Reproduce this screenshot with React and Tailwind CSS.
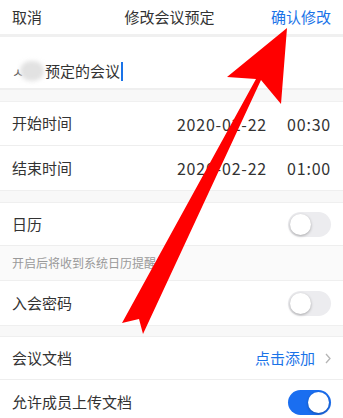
import React from "react";

const font = { fontFamily: '"Noto Sans CJK SC", "Noto Sans", sans-serif' };

const Toggle = ({ on }) => (
  <div
    className={
      "w-[43px] h-[25px] rounded-full p-[2px] flex items-center " +
      (on ? "bg-[#1a6ef0] justify-end" : "bg-[#ececef] justify-start")
    }
  >
    <div className="w-[21px] h-[21px] rounded-full bg-white shadow-[0_1px_3px_rgba(0,0,0,0.3)]"></div>
  </div>
);

const Row = ({ label, children, border = true, h = "h-[44px]" }) => (
  <div className={"flex items-center justify-between bg-white px-[12px] " + h + (border ? " border-b border-[#eeeeee]" : "")}>
    <span className="text-[15px] text-[#333]">{label}</span>
    {children}
  </div>
);

const App = () => {
  return (
    <div className="relative w-[343px] h-[418px] overflow-hidden bg-[#f8f8f8]" style={font}>
      {/* header */}
      <div className="flex items-center justify-between h-[34px] bg-white px-[12px] text-[15px]">
        <span className="text-[#333]">取消</span>
        <span className="text-[#333] ml-[26px]">修改会议预定</span>
        <span className="text-[#1a73e8]">确认修改</span>
      </div>
      <div className="h-[3px] bg-[#f0f0f0]"></div>

      {/* title input */}
      <div className="flex items-center h-[53px] bg-white px-[12px] pt-[17px] border-b-2 border-[#efefef]">
        <span className="text-[13px] text-[#555] leading-none">ㅅ</span>
        <span className="w-[24px] h-[20px] -ml-[4px] bg-[#e2e2e2] blur-[2px] rounded-full"></span>
        <span className="text-[15px] text-[#333] ml-[1px]">预定的会议</span>
        <span className="w-[2px] h-[19px] bg-[#1a73e8] ml-[1px]"></span>
      </div>
      <div className="h-[12px] bg-[#f8f8f8] border-b border-[#f0f0f0]"></div>

      <Row label="开始时间">
        <div className="flex gap-[20px] text-[16px] tracking-[0.8px] text-[#333]">
          <span>2020-02-22</span>
          <span>00:30</span>
        </div>
      </Row>
      <Row label="结束时间" border={false}>
        <div className="flex gap-[20px] text-[16px] tracking-[0.8px] text-[#333]">
          <span>2020-02-22</span>
          <span>01:00</span>
        </div>
      </Row>
      <div className="h-[13px] bg-[#f8f8f8] border-y border-[#efefef]"></div>

      <Row label="日历" h="h-[43px]">
        <Toggle on={false} />
      </Row>
      <div className="h-[35px] flex items-center px-[12px] bg-[#fafafa] border-b border-[#efefef]">
        <span className="text-[12px] text-[#999]">开启后将收到系统日历提醒</span>
      </div>
      <Row label="入会密码" border={false}>
        <Toggle on={false} />
      </Row>
      <div className="h-[12px] bg-[#f8f8f8] border-y border-[#efefef]"></div>

      <Row label="会议文档" h="h-[43px]">
        <div className="flex items-center gap-[10px]">
          <span className="text-[15px] text-[#1a73e8]">点击添加</span>
          <svg width="6" height="11" viewBox="0 0 6 11" fill="none">
            <path d="M1 1l4 4.5L1 10" stroke="#b5b5b5" strokeWidth="1.3" />
          </svg>
        </div>
      </Row>
      <Row label="允许成员上传文档" border={false}>
        <Toggle on={true} />
      </Row>

      {/* red arrow annotation */}
      <svg className="absolute left-0 top-0 pointer-events-none" width="343" height="418" viewBox="0 0 343 418">
        <polygon
          points="287,28 281,104 261,80 143,334 139,319 122,323 256,79 227,77"
          fill="#ff0000"
        />
      </svg>
    </div>
  );
};

export default App;
